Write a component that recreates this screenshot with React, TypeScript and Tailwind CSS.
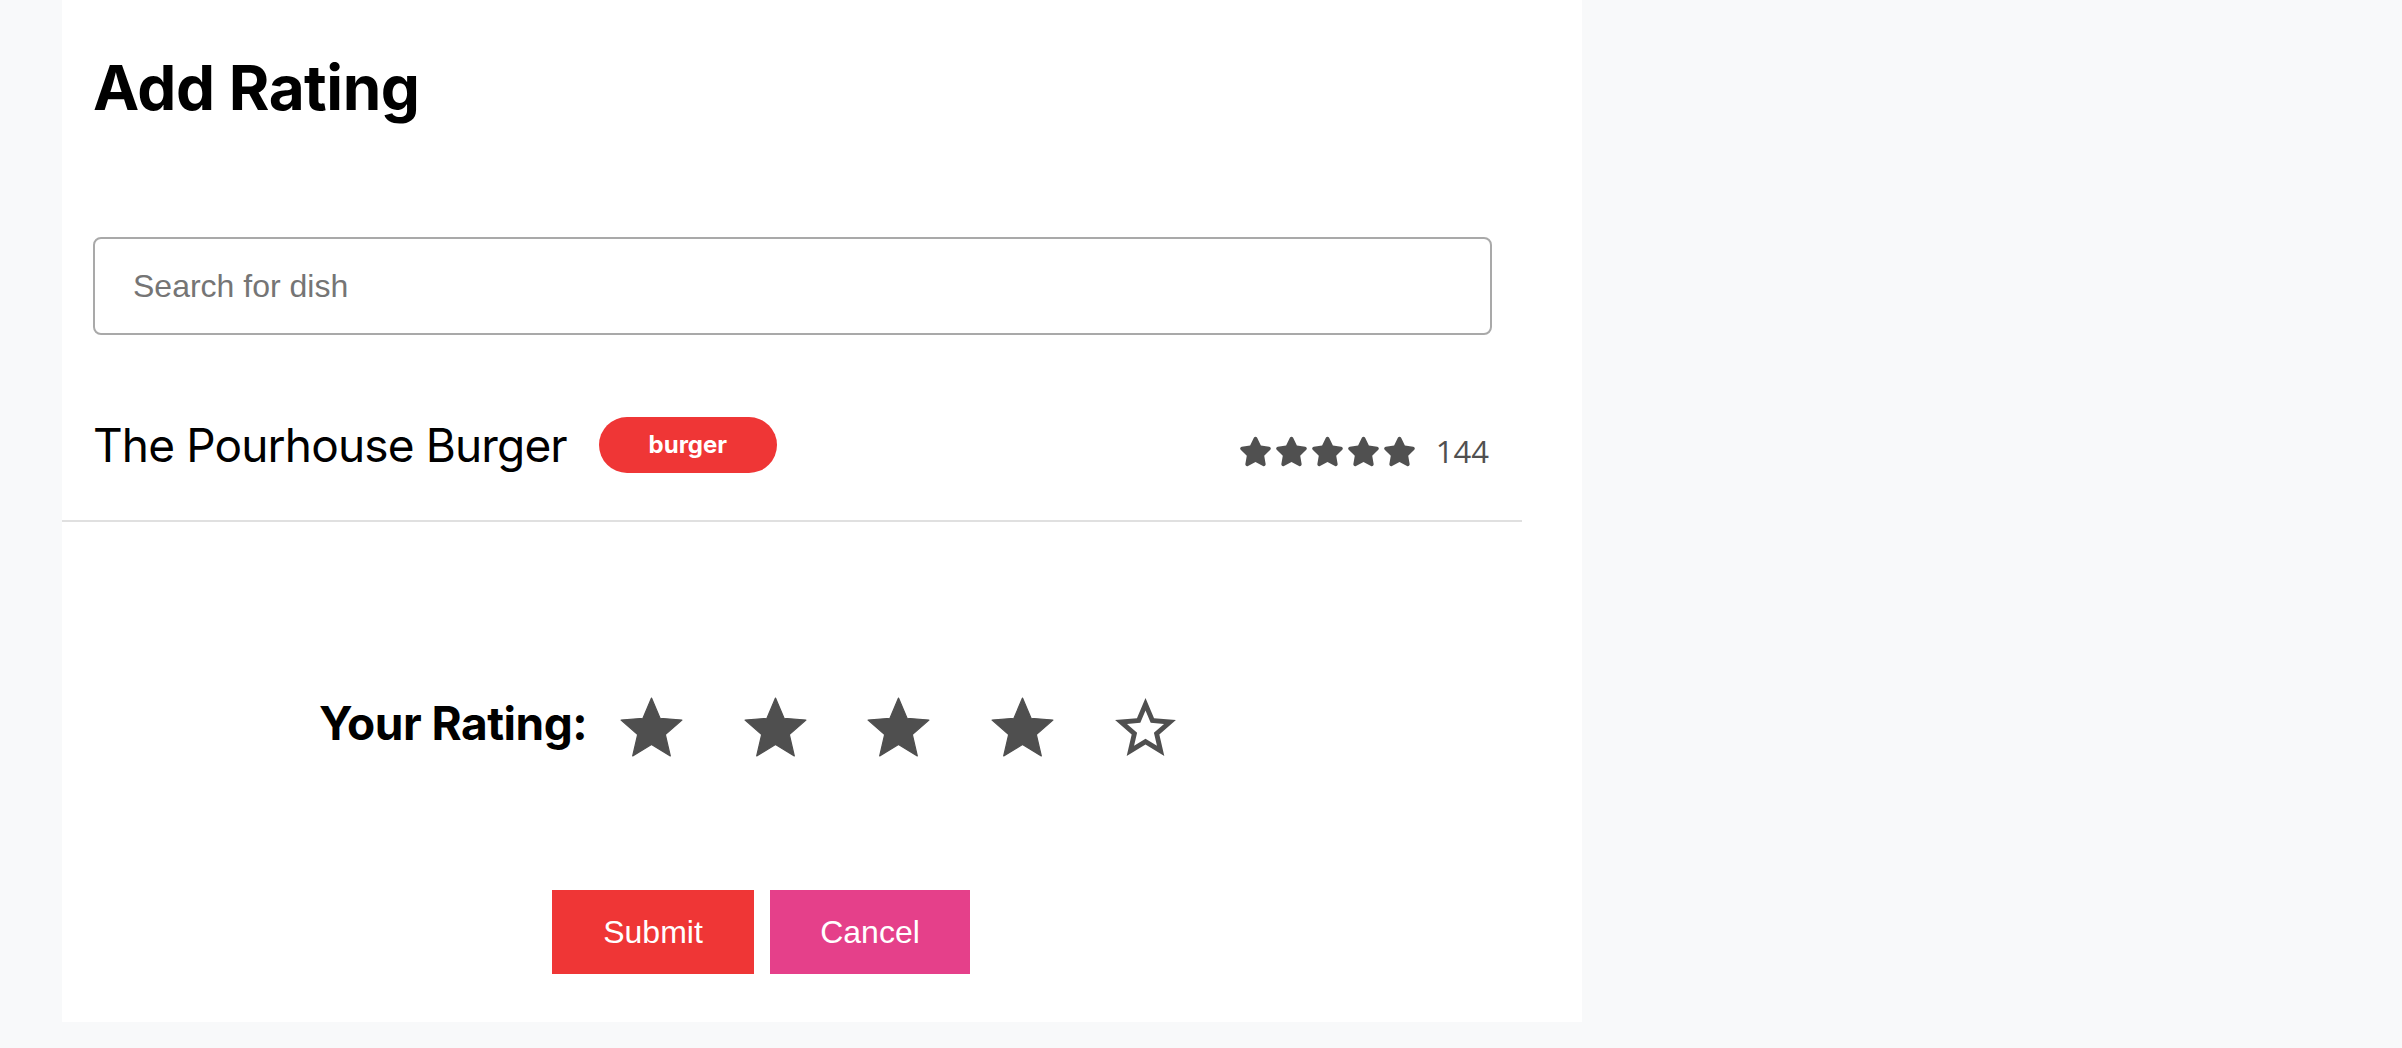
import React from "react";
import { FaStar } from "react-icons/fa";

const STAR =
  "M12 17.27L18.18 21l-1.64-7.03L22 9.24l-7.19-.61L12 2 9.19 8.63 2 9.24l5.46 4.73L5.82 21z";
const STAR_BORDER =
  "M22 9.24l-7.19-.62L12 2 9.19 8.63 2 9.24l5.46 4.73L5.82 21 12 17.27 18.18 21l-1.63-7.03L22 9.24zM12 15.4l-3.76 2.27 1-4.28-3.32-2.88 4.38-.38L12 6.1l1.71 4.04 4.38.38-3.32 2.88 1 4.28L12 15.4z";

function BigStar({ filled }: { filled: boolean }) {
  return (
    <svg
      viewBox="0 0 24 24"
      className="h-[73px] w-[73px] shrink-0"
      fill="#4f4f4f"
      stroke={filled ? "#4f4f4f" : "none"}
      strokeWidth={filled ? 0.4 : 0}
      strokeLinejoin="round"
    >
      <path d={filled ? STAR : STAR_BORDER} />
    </svg>
  );
}

export default function App() {
  const rating = 4;
  return (
    <div className="min-h-screen bg-[#f8f9fa]">
      <div className="ml-[62px] w-[1520px] bg-white pb-[48px]">
        <div className="w-[1460px]">
          <h1 className="pl-[31px] pt-[50px] font-['Inter',sans-serif] text-[62px] font-bold leading-[75px] tracking-[-0.5px] text-black">
            Add Rating
          </h1>

          <div className="mt-[112px] pl-[31px]">
            <input
              type="text"
              placeholder="Search for dish"
              className="block h-[98px] w-[1399px] rounded-[8px] border-2 border-[#a9a9a9] bg-white pl-[38px] font-['Liberation_Sans',Arial,sans-serif] text-[32px] text-black outline-none placeholder:text-[#757575]"
            />
          </div>

          <div className="mt-[54px] flex h-[112px] items-center pl-[31px] pr-[33px]">
            <span className="font-['Inter',sans-serif] text-[46px] leading-none tracking-[-0.85px] text-black">
              The Pourhouse Burger
            </span>
            <span className="ml-[32px] flex h-[56px] w-[178px] items-center justify-center rounded-full bg-[#ef3636] font-['Inter',sans-serif] text-[24px] font-bold text-white">
              burger
            </span>
            <div className="ml-auto mt-[13px] flex items-center">
              <div className="flex items-center gap-[3px] text-[#505050]">
                {[0, 1, 2, 3, 4].map((i) => (
                  <FaStar key={i} size={33} />
                ))}
              </div>
              <span className="ml-[20px] font-['Open_Sans',sans-serif] text-[31px] leading-none text-[#505050]">
                144
              </span>
            </div>
          </div>

          <div className="mt-[19px] h-[2px] bg-[#e0e0e0]" />

          <div className="mt-[170px] flex h-[73px] items-center pl-[257px]">
            <span className="mb-[12px] font-['Inter',sans-serif] text-[46px] font-bold leading-none tracking-[-0.5px] text-black">
              Your Rating:
            </span>
            <div className="ml-[28px] flex items-center gap-[50.5px]">
              {[1, 2, 3, 4, 5].map((n) => (
                <BigStar key={n} filled={n <= rating} />
              ))}
            </div>
          </div>

          <div className="mt-[125px] flex gap-[16px] pl-[490px]">
            <button className="flex h-[84px] w-[202px] items-center justify-center bg-[#ef3636] font-['Liberation_Sans',Arial,sans-serif] text-[32px] text-white">
              Submit
            </button>
            <button className="flex h-[84px] w-[200px] items-center justify-center bg-[#e5408a] font-['Liberation_Sans',Arial,sans-serif] text-[32px] text-white">
              Cancel
            </button>
          </div>
        </div>
      </div>
    </div>
  );
}
